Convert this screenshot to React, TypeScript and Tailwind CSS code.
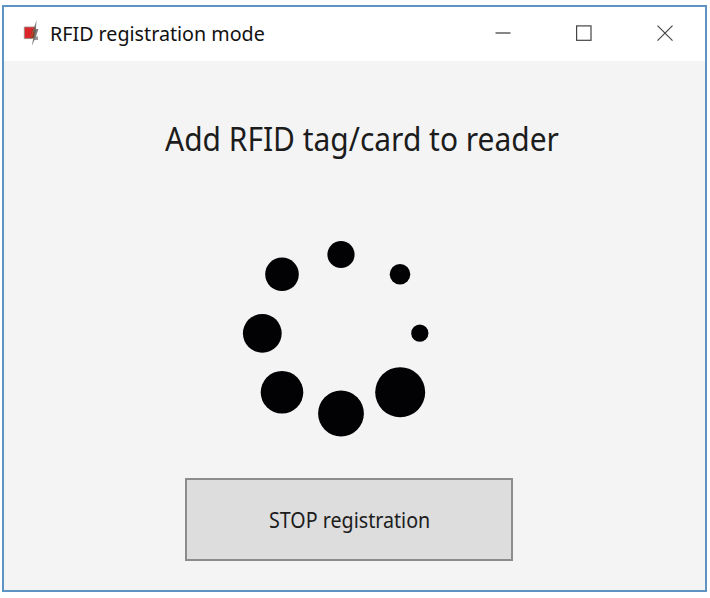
const dots = [
  { cx: 341, cy: 254.5, r: 13.6 },
  { cx: 400, cy: 274.2, r: 10.3 },
  { cx: 419.8, cy: 333.2, r: 8.6 },
  { cx: 400.2, cy: 392.2, r: 25 },
  { cx: 341, cy: 413.5, r: 22.9 },
  { cx: 282, cy: 392.3, r: 21.3 },
  { cx: 262.3, cy: 333.3, r: 19.4 },
  { cx: 282, cy: 274.3, r: 16.8 },
];

function TitleBar() {
  return (
    <div className="flex h-[54px] items-center bg-white">
      <svg className="ml-[19px] h-7 w-[17px] shrink-0" viewBox="0 0 17 28">
        <path d="M1.3 7H12.5L8.6 18.6H1.3Z" fill="#dc2429" stroke="#9c8a84" strokeWidth="0.9" />
        <path d="M7 18 L9.2 9.5 H13.2 L11 18.5 H9.3Z" fill="#963c20" />
        <path d="M8.2 17.5 L10.3 10 L12.5 8.5" fill="none" stroke="#c64a34" strokeWidth="1" />
        <path d="M13.6 0 L9.6 12 H11.4 L8.8 26 L12.8 17 L15.4 9 H12.9Z" fill="#66645f" opacity="0.85" />
        <path d="M11.5 16.5H15V20H11Z" fill="#777" opacity="0.75" />
      </svg>
      <span className="ml-[10px] flex-1 whitespace-nowrap text-[20.5px] leading-[30px] text-[#111]">
        <span className="inline-block origin-left -translate-y-px scale-x-[0.96]">RFID registration mode</span>
      </span>
      <svg className="mr-[31px] h-5 w-[180px] shrink-0" viewBox="0 0 180 20" fill="none" stroke="#444">
        <path d="M1.5 9H16.5" strokeWidth="1.3" />
        <rect x="82.6" y="1.9" width="14.4" height="14.4" strokeWidth="1.2" />
        <path d="M163.5 1.7L178.5 16.7M178.5 1.7L163.5 16.7" strokeWidth="1.2" />
      </svg>
    </div>
  );
}

export default function App() {
  return (
    <div className="h-[598px] w-[710px] bg-white pl-[2px] pt-[5px] font-['Noto_Sans','Open_Sans',sans-serif]">
      <div className="flex h-[587px] w-[705px] flex-col border-2 border-[#5f94c2] bg-[#f4f4f4]">
        <TitleBar />
        <div className="flex flex-1 flex-col">
          <h1 className="ml-[161px] mt-[54px] h-12 whitespace-nowrap text-[32px] leading-[48px] text-[#1c1c1c]">
            <span className="inline-block origin-left scale-x-[0.936]">Add RFID tag/card to reader</span>
          </h1>
          <svg className="ml-[226px] mt-[67px] h-[215px] w-[210px] shrink-0" viewBox="230 230 210 215">
            {dots.map((d) => (
              <circle key={`${d.cx}-${d.cy}`} cx={d.cx} cy={d.cy} r={d.r} fill="#020103" />
            ))}
          </svg>
          <button className="ml-[181px] mt-[33px] h-[83px] w-[328px] shrink-0 whitespace-nowrap border-2 border-[#8c8c8c] bg-[#ddd] pl-[82px] pt-0.5 text-left text-[21.5px] text-[#1c1c1c]">
            <span className="inline-block origin-left scale-x-[0.915]">STOP registration</span>
          </button>
        </div>
      </div>
    </div>
  );
}
